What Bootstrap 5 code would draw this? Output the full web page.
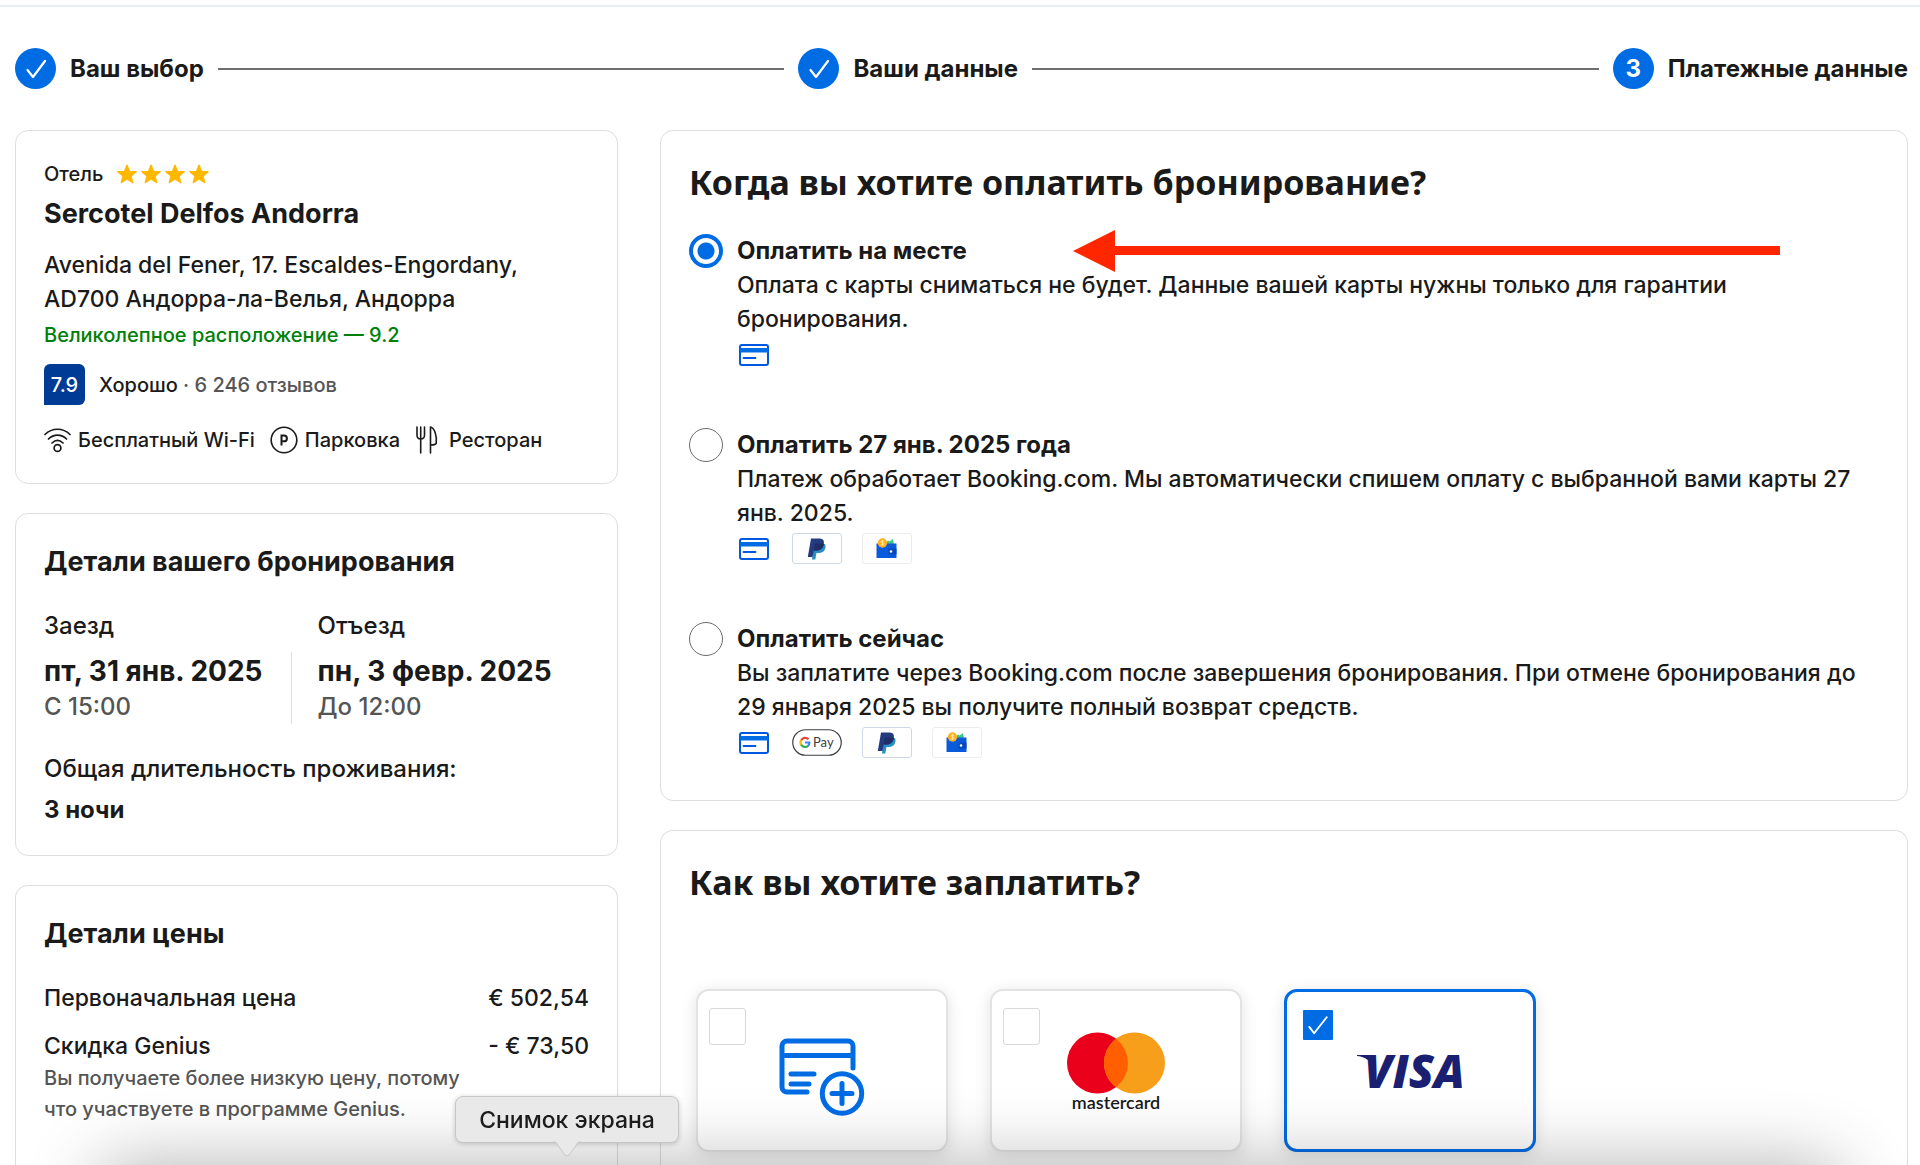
<!DOCTYPE html>
<html lang="ru">
<head>
<meta charset="utf-8">
<meta name="viewport" content="width=device-width, initial-scale=1">
<title>Платежные данные</title>
<link href="https://cdn.jsdelivr.net/npm/bootstrap@5.3.0/dist/css/bootstrap.min.css" rel="stylesheet">
<style>
  :root { --brand: #006ce4; --line: #dedede; --ink: #1a1a1a; }
  body { font-family: Inter, "Liberation Sans", sans-serif; font-size: 23px; font-weight: 450; line-height: 34px; color: var(--ink); background: #fff; min-height: 100vh; display: flex; flex-direction: column; overflow-x: hidden; }
  .topline { height: 2px; margin-top: 5px; background: #e9eef2; }
  .page { padding: 0 12px 0 15px; }
  .strong { font-weight: 700; font-size: 24px; }
  .small-text { font-size: 20px; line-height: 30px; }
  .muted { color: #555; }
  /* steps */
  .steps { padding: 41px 0; gap: 14px; }
  .step-dot { width: 41px; height: 41px; border-radius: 50%; background: var(--brand); color: #fff; flex: none; }
  .step { gap: 14px; }
  .step-line { height: 2px; background: #6f6f6f; }
  /* layout */
  .split { --bs-gutter-x: 42px; }
  .stack { gap: 29px; }
  .panel { border: 1px solid var(--line); border-radius: 13px; padding: 28px; background: #fff; }
  .panel-open { border-bottom: 0; border-radius: 13px 13px 0 0; padding-bottom: 12px; }
  .panel-title { font-size: 27px; line-height: 40px; font-weight: 700; margin: 0 0 27px; }
  .main-title { font: 700 34px/46px "Noto Sans", sans-serif; margin: 0; }
  .hotel-name { font-size: 27px; line-height: 36px; font-weight: 700; margin: 7px 0 16px; }
  .stars { gap: 4px; }
  .stars-label { margin-right: 14px; }
  .good { color: #008009; margin-top: 4px; }
  .score { width: 41px; height: 41px; background: #003b95; color: #fff; border-radius: 6px 6px 6px 0; flex: none; }
  .score-row { margin-top: 14px; gap: 14px; }
  .facilities { margin-top: 20px; gap: 15px; }
  .facility { gap: 7px; }
  .dates > div + div { padding-left: 26px; }
  .date-label { margin-bottom: 9px; font-size: 24px; }
  .date-box.first { padding-right: 28px; border-right: 1px solid var(--line); }
  .date-main { font-size: 28px; line-height: 38px; font-weight: 700; }
  .date-time { font-size: 24px; color: #555; }
  .total { margin-top: 28px; gap: 7px; }
  .total-label { font-size: 24px; }
  .prices { gap: 14px; }
  .note { line-height: 31px; max-width: 450px; }
  /* options */
  .options { margin-top: 29px; gap: 44px; }
  .pay-option { position: relative; padding-bottom: 12px; gap: 14px; margin: 0; }
  .pay-option .form-check-input { width: 34px; height: 34px; margin: 0; border: 1px solid #6b6b6b; flex: none; background-color: #fff; box-shadow: none; }
  .pay-option .form-check-input:checked { border: 4px solid var(--brand); background-image: radial-gradient(circle, var(--brand) 8px, #fff 9px); background-size: 100%; }
  .methods { margin-top: 1px; height: 35px; gap: 20px; }
  .m-card { width: 35px; padding-left: 2px; }
  .chip { width: 50px; height: 31px; border: 1px solid #ececee; border-radius: 3px; }
  .chip.pp { border-color: #cfd8e6; }
  .arrow { position: absolute; left: 384px; top: -4px; width: 707px; }
  /* tiles */
  .tiles { margin-top: 84px; padding: 0 7px; gap: 42px; }
  .tile { width: 252px; height: 163px; display: grid; border: 2px solid #e3e3e3; border-radius: 13px; background: #fff; box-shadow: 0 3px 16px rgba(0,0,0,.12); cursor: pointer; }
  .tile > * { grid-area: 1 / 1; }
  .tile svg { place-self: center; }
  .tile .form-check-input { width: 37px; height: 37px; margin: 17px 0 0 11px; border: 1px solid #d9d9d9; border-radius: 3px; box-shadow: none; }
  .tile .form-check-input:checked { width: 30px; height: 30px; margin: 18px 0 0 16px; border: 0; border-radius: 1px; background-color: var(--brand); background-image: url("data:image/svg+xml,%3Csvg xmlns='http://www.w3.org/2000/svg' viewBox='0 0 31 31'%3E%3Cpath d='M6.500 17.500l5 6.500L24.500 7.500' fill='none' stroke='white' stroke-width='2' stroke-linecap='round' stroke-linejoin='round'/%3E%3C/svg%3E"); }
  .tile:has(:checked) { border: 3px solid var(--brand); }
  /* desktop dock */
  .dock-shadow { position: fixed; left: 5%; right: 4%; top: 100%; height: 80px; border-radius: 30px; box-shadow: 0 0 72px rgba(0,0,0,.31); pointer-events: none; }
  .dock-tip { position: fixed; left: 455px; bottom: 22px; width: 224px; height: 47px; background: #e9e9e9; border: 1px solid #c6c6c6; border-radius: 8px; color: #1c1c1c; box-shadow: 0 1px 5px rgba(0,0,0,.2); }
  .dock-tip svg { position: absolute; left: 50%; top: 100%; margin: -1px 0 0 -15px; }
</style>
</head>
<body>
<svg width="0" height="0" class="position-absolute" aria-hidden="true">
  <defs>
    <symbol id="star" viewBox="0 0 20 20"><path fill="#ffb700" stroke="#ffb700" stroke-width="1.200" stroke-linejoin="round" d="M10 1l2.500 6.300 6.700.4-5.200 4.300 1.800 6.700L10 15l-5.800 3.700L6 12 .8 7.700l6.700-.4z"/></symbol>
    <symbol id="tick" viewBox="0 0 24 24"><path d="M3.500 13l5.500 7L21 4" fill="none" stroke="#fff" stroke-width="2.200" stroke-linecap="round" stroke-linejoin="round"/></symbol>
    <symbol id="card" viewBox="0 0 30 22"><rect x="1" y="1" width="28" height="20" rx="2" fill="#fff" stroke="#0057e0" stroke-width="2"/><path d="M1 4h28v4.500H1z" fill="#006ce4"/><path d="M4.500 14h12" stroke="#0057e0" stroke-width="1.800" stroke-linecap="round"/></symbol>
    <symbol id="paypal" viewBox="0 0 20 22"><path fill="#2790c3" d="M7 6h11c1.300 2.800.6 9-6.500 9h-2l-1.200 6.500H5z"/><path fill="#253b80" d="M4 .5h8.500c5 0 5 4.500 3.800 7.300-1 3.200-3.800 4.700-7 4.700H6.800L5.500 19H.8z"/><path fill="#222d65" d="M7.800 5.500h7.700c1 .3 1.400.6 1.400.9-1 4.300-4 6.100-7.600 6.100H6.800z"/></symbol>
    <symbol id="wallet" viewBox="0 0 21 21"><path fill="#3bc78b" d="M9 6l3-3.500 1.500 1L17 1l1 6H9z"/><path fill="#0a5bdc" d="M.5 5.500h20V20H.5z"/><path fill="#0747bd" d="M12.500 10.500h8v6h-8z"/><circle cx="15" cy="13.500" r="1.300" fill="#fff"/><circle cx="6.500" cy="5" r="4.700" fill="#ffb01f"/><path d="M8 3.600c-.6-1-3-.8-3 .3 0 1.300 3.100.8 3.100 2.200 0 1.200-2.500 1.300-3.200.2M6.500 2v6" fill="none" stroke="#fff0b8" stroke-width=".8"/></symbol>
    <symbol id="gpay" viewBox="0 0 50 27"><rect x=".75" y=".75" width="48.500" height="25.500" rx="12.700" fill="#fff" stroke="#3c4043" stroke-width="1.200"/><g fill="none" stroke-width="2.200"><path stroke="#ea4335" d="M16.500 10.200A4.600 4.600 0 0 0 9.200 11.200"/><path stroke="#fbbc04" d="M9.300 11A4.600 4.600 0 0 0 9.300 16"/><path stroke="#34a853" d="M9.200 15.800A4.600 4.600 0 0 0 16 17"/><path stroke="#4285f4" d="M15.800 17.100a4.600 4.600 0 0 0 1.600-3.600H13"/></g><text x="21" y="18" font-family="Lato, sans-serif" font-size="13" font-weight="400" fill="#3c4043">Pay</text></symbol>
  </defs>
</svg>

<div class="topline"></div>
<div class="page flex-grow-1 d-flex flex-column">
  <nav class="steps d-flex align-items-center" aria-label="Этапы бронирования">
    <div class="step d-flex align-items-center"><span class="step-dot d-flex align-items-center justify-content-center"><svg width="24" height="24"><use href="#tick"/></svg></span><span class="strong">Ваш выбор</span></div>
    <div class="step-line flex-grow-1"></div>
    <div class="step d-flex align-items-center"><span class="step-dot d-flex align-items-center justify-content-center"><svg width="24" height="24"><use href="#tick"/></svg></span><span class="strong">Ваши данные</span></div>
    <div class="step-line flex-grow-1"></div>
    <div class="step d-flex align-items-center"><span class="step-dot strong d-flex align-items-center justify-content-center">3</span><span class="strong">Платежные данные</span></div>
  </nav>

  <div class="row split flex-grow-1">
    <aside class="col-4 stack d-flex flex-column">
      <section class="panel">
        <div class="small-text d-flex align-items-center">
          <span class="stars-label">Отель</span>
          <span class="stars d-flex" role="img" aria-label="4 звезды"><svg width="20" height="20"><use href="#star"/></svg><svg width="20" height="20"><use href="#star"/></svg><svg width="20" height="20"><use href="#star"/></svg><svg width="20" height="20"><use href="#star"/></svg></span>
        </div>
        <h2 class="hotel-name">Sercotel Delfos Andorra</h2>
        <div>Avenida del Fener, 17. Escaldes-Engordany,<br>AD700 Андорра-ла-Велья, Андорра</div>
        <div class="small-text good">Великолепное расположение — 9.2</div>
        <div class="small-text score-row d-flex align-items-center"><span class="score d-flex align-items-center justify-content-center">7.9</span><span>Хорошо <span class="muted">· 6 246 отзывов</span></span></div>
        <div class="small-text facilities d-flex align-items-center">
          <span class="facility d-flex align-items-center"><svg width="27" height="27" viewBox="0 0 27 27" fill="none" stroke="#1a1a1a" stroke-width="1.700" stroke-linecap="round"><path d="M1 7.500C8 .5 19 .5 26 7.500M4.500 12c5.200-5.200 12.800-5.200 18 0M8 16c3.400-3.200 7.600-3.200 11 0"/><circle cx="13.500" cy="21" r="3.400"/></svg>Бесплатный Wi-Fi</span>
          <span class="facility d-flex align-items-center"><svg width="28" height="28" viewBox="0 0 28 28" fill="none" stroke="#1a1a1a" stroke-width="1.600"><circle cx="14" cy="14" r="12.800"/><path stroke-width="2" d="M11.500 19.500V9.500h2.500a2.800 2.800 0 0 1 0 5.800h-2.500"/></svg>Парковка</span>
          <span class="facility d-flex align-items-center"><svg width="27" height="28" viewBox="0 0 27 28" fill="none" stroke="#1a1a1a" stroke-width="1.600" stroke-linecap="round" stroke-linejoin="round"><path d="M2 1v8c0 3 1.500 4 3.700 4S9.500 12 9.500 9V1M5.700 1v26M15.500 27V1c4 1 6.500 8 5.700 16.500-1 1.500-3.500 1.500-5.700 1.500"/></svg>Ресторан</span>
        </div>
      </section>

      <section class="panel">
        <h2 class="panel-title">Детали вашего бронирования</h2>
        <div class="dates d-flex">
          <div><div class="date-label">Заезд</div><div class="date-box first"><div class="date-main">пт, 31 янв. 2025</div><div class="date-time">С 15:00</div></div></div>
          <div><div class="date-label">Отъезд</div><div class="date-box"><div class="date-main">пн, 3 февр. 2025</div><div class="date-time">До 12:00</div></div></div>
        </div>
        <div class="total d-flex flex-column"><div class="total-label">Общая длительность проживания:</div><div class="strong">3 ночи</div></div>
      </section>

      <section class="panel panel-open flex-grow-1">
        <h2 class="panel-title">Детали цены</h2>
        <div class="prices d-flex flex-column">
          <div class="d-flex justify-content-between"><span>Первоначальная цена</span><span>€ 502,54</span></div>
          <div class="d-flex justify-content-between"><span>Скидка Genius</span><span>- € 73,50</span></div>
        </div>
        <div class="small-text muted note">Вы получаете более низкую цену, потому что участвуете в программе Genius.</div>
      </section>
    </aside>

    <main class="col-8 stack d-flex flex-column">
      <section class="panel">
        <h1 class="main-title">Когда вы хотите оплатить бронирование?</h1>
        <div class="options d-flex flex-column">
          <div class="pay-option d-flex">
            <input class="form-check-input" type="radio" name="when" id="when1" checked>
            <label for="when1"><span class="strong d-block">Оплатить на месте</span>Оплата с карты сниматься не будет. Данные вашей карты нужны только для гарантии бронирования.
              <span class="methods d-flex align-items-center"><span class="m-card d-flex"><svg width="30" height="22"><use href="#card"/></svg></span></span></label>
            <svg class="arrow" height="42" viewBox="0 0 707 42" aria-hidden="true"><path fill="#ff2600" d="M0 21L42 0v16h665v9H42v17z"/></svg>
          </div>
          <div class="pay-option d-flex">
            <input class="form-check-input" type="radio" name="when" id="when2">
            <label for="when2"><span class="strong d-block">Оплатить 27 янв. 2025 года</span>Платеж обработает Booking.com. Мы автоматически спишем оплату с выбранной вами карты 27 янв. 2025.
              <span class="methods d-flex align-items-center"><span class="m-card d-flex"><svg width="30" height="22"><use href="#card"/></svg></span><span class="chip pp d-flex align-items-center justify-content-center"><svg width="20" height="22"><use href="#paypal"/></svg></span><span class="chip d-flex align-items-center justify-content-center"><svg width="21" height="21"><use href="#wallet"/></svg></span></span></label>
          </div>
          <div class="pay-option d-flex">
            <input class="form-check-input" type="radio" name="when" id="when3">
            <label for="when3"><span class="strong d-block">Оплатить сейчас</span>Вы заплатите через Booking.com после завершения бронирования. При отмене бронирования до 29 января 2025 вы получите полный возврат средств.
              <span class="methods d-flex align-items-center"><span class="m-card d-flex"><svg width="30" height="22"><use href="#card"/></svg></span><svg width="50" height="27"><use href="#gpay"/></svg><span class="chip pp d-flex align-items-center justify-content-center"><svg width="20" height="22"><use href="#paypal"/></svg></span><span class="chip d-flex align-items-center justify-content-center"><svg width="21" height="21"><use href="#wallet"/></svg></span></span></label>
          </div>
        </div>
      </section>

      <section class="panel panel-open flex-grow-1">
        <h2 class="main-title">Как вы хотите заплатить?</h2>
        <div class="tiles d-flex">
          <label class="tile"><input class="form-check-input" type="checkbox" aria-label="Новая карта">
            <svg width="86" height="92" viewBox="0 -12 86 92" fill="none" stroke="#006ce4" stroke-width="5" stroke-linecap="round" stroke-linejoin="round"><path d="M74 31V9a5 5 0 0 0-5-5H8a5 5 0 0 0-5 5v41a5 5 0 0 0 5 5h20M3 18.500h71M12 37h23M12 47h18"/><circle cx="63" cy="56.500" r="19.700"/><path d="M53 56.500h20M63 46.500v20"/></svg></label>
          <label class="tile"><input class="form-check-input" type="checkbox" aria-label="Mastercard">
            <svg width="98" height="86" viewBox="0 -4 98 86"><circle cx="30.500" cy="31" r="30.500" fill="#eb001b"/><circle cx="67.500" cy="31" r="30.500" fill="#f79e1b"/><path fill="#ff5f00" d="M49 6.750a30.500 30.500 0 0 1 0 48.500a30.500 30.500 0 0 1 0-48.500z"/><text x="49" y="77" text-anchor="middle" font-family="Lato, sans-serif" font-size="18" font-weight="600" fill="#1a1a1a">mastercard</text></svg></label>
          <label class="tile"><input class="form-check-input" type="checkbox" aria-label="Visa" checked>
            <svg width="108" height="40" viewBox="0 0 108 40"><path fill="#1a1f71" d="M1 4h15v9C12 8 7 5.500 1 5z"/><text x="8" y="37" font-family="Open Sans, sans-serif" font-size="46" font-weight="800" font-style="italic" fill="#1a1f71">VISA</text></svg></label>
        </div>
      </section>
    </main>
  </div>
</div>

<div class="dock-shadow"></div>
<div class="dock-tip d-flex align-items-center justify-content-center" role="tooltip">Снимок экрана<svg width="30" height="16" viewBox="0 0 30 16"><path d="M0 0c5 0 5 3 7 6l6 8q2 2 4 0l6-8c2-3 2-6 7-6z" fill="#e9e9e9"/><path d="M1 1c4 0 4 2 6 5l6 8q2 2 4 0l6-8c2-3 2-5 6-5" fill="none" stroke="#c6c6c6"/></svg></div>
<script src="https://cdn.jsdelivr.net/npm/bootstrap@5.3.0/dist/js/bootstrap.bundle.min.js"></script>
</body>
</html>
